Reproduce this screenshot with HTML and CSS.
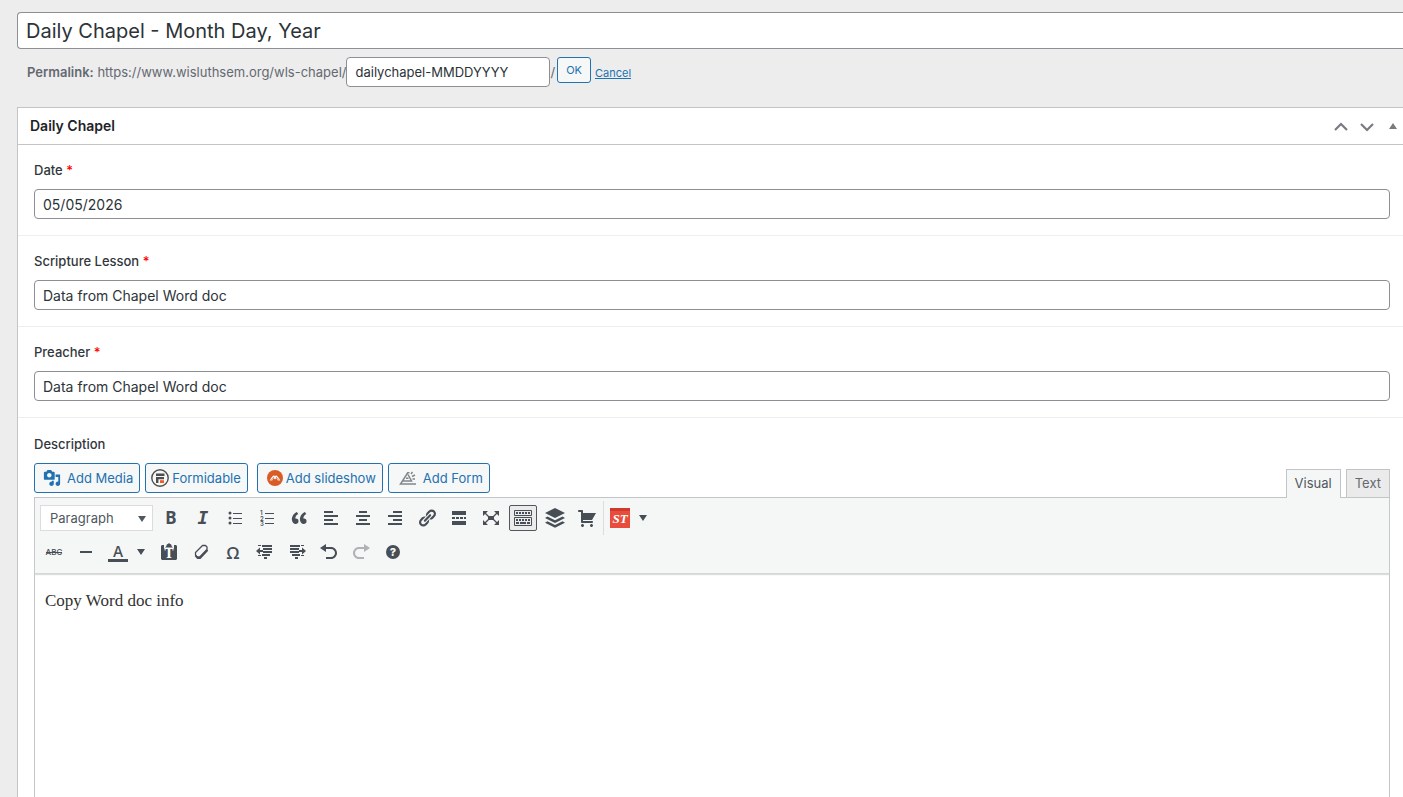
FILE: index.html
```
<!DOCTYPE html>
<html lang="en">
<head>
    <meta charset="UTF-8">
    <meta name="viewport" content="width=device-width, initial-scale=1.0">
    <title>Edit Daily Chapel</title>
    <link rel="stylesheet" href="styles.css">
</head>
<body>
    <form class="post-edit">
        <input class="title" type="text" value="Daily Chapel - Month Day, Year" aria-label="Title">

        <div class="permalink">
            <label for="slug"><strong>Permalink:</strong> https://www.wisluthsem.org/wls-chapel/</label><input class="text-input slug" id="slug" type="text" value="dailychapel-MMDDYYYY"><span>/</span>
            <button type="button" class="button button-small">OK</button>
            <a href="#" class="cancel">Cancel</a>
        </div>

        <section class="postbox">
            <header class="postbox-header">
                <h2>Daily Chapel</h2>
                <div class="handle-actions">
                    <button type="button" aria-label="Move up"><svg class="outline" width="20" height="20" viewBox="0 0 20 20"><path d="M4 14l6-6 6 6" stroke-width="2.200"/></svg></button>
                    <button type="button" aria-label="Move down"><svg class="outline" width="20" height="20" viewBox="0 0 20 20"><path d="M4 8l6 6 6-6" stroke-width="2.200"/></svg></button>
                    <button type="button" aria-label="Toggle panel"><svg width="20" height="20" viewBox="0 0 20 20"><path d="M6 13l4-6 4 6z"/></svg></button>
                </div>
            </header>

            <div class="field">
                <label for="date">Date <span class="required">*</span></label>
                <input class="text-input" id="date" type="text" value="05/05/2026">
            </div>
            <div class="field">
                <label for="lesson">Scripture Lesson <span class="required">*</span></label>
                <input class="text-input" id="lesson" type="text" value="Data from Chapel Word doc">
            </div>
            <div class="field">
                <label for="preacher">Preacher <span class="required">*</span></label>
                <input class="text-input" id="preacher" type="text" value="Data from Chapel Word doc">
            </div>

            <div class="field field-editor">
                <label for="description">Description</label>
                <div class="editor-tools">
                    <div class="media-buttons">
                        <button type="button" class="button">
                            <svg width="18" height="18" viewBox="0 0 20 20"><path d="M13 11V4c0-.55-.45-1-1-1h-1.670L9 1H5L3.670 3H2c-.55 0-1 .45-1 1v7c0 .55.45 1 1 1h10c.55 0 1-.45 1-1zM7 4.500c1.380 0 2.500 1.120 2.500 2.500S8.380 9.500 7 9.500 4.500 8.380 4.500 7 5.620 4.500 7 4.500zM14 6h5v10.500c0 1.380-1.120 2.500-2.500 2.500S14 17.880 14 16.500s1.120-2.500 2.500-2.500c.17 0 .34.02.5.05V9h-3V6zm-4 8.050V13h2v3.500c0 1.380-1.120 2.500-2.500 2.500S7 17.880 7 16.500 8.120 14 9.500 14c.17 0 .34.02.5.05z"/></svg>
                            Add Media
                        </button>
                        <button type="button" class="button formidable">
                            <svg width="18" height="18" viewBox="0 0 18 18"><circle cx="9" cy="9" r="8.200" fill="none" stroke="#4d4d4d" stroke-width="1.400"/><path d="M5 4.500h8.500V7H5zM5 8h8v2.200H7.400V14H5z" fill="#4d4d4d"/><path d="M9 11.200h4V14H9z" fill="#f05a24"/></svg>
                            Formidable
                        </button>
                        <button type="button" class="button slideshow">
                            <svg width="16" height="16" viewBox="0 0 16 16"><circle cx="8" cy="8" r="8" fill="#d95b26"/><path d="M2.700 10.500C4 8 5.500 6 7 5.300l1 1.200 1-1.200c1.500.7 3 2.700 4.300 5.200h-2.500L9.300 8 8 9.500 6.700 8l-1.500 2.500z" fill="#fff"/><path d="M4 10.500l3-3.500m2 0l3 3.500" stroke="#d95b26" stroke-width=".7"/></svg>
                            Add slideshow
                        </button>
                        <button type="button" class="button add-form">
                            <svg class="outline" width="18" height="18" viewBox="0 0 18 18" stroke-width="1.500"><path d="M10.500 3.800H8.700L1.500 15H17M4 12h8.500L9 5.500M9.500 9.200L7 9.300M12 5l1.500-2M13 7.500l3-1.500M13.500 10H16"/></svg>
                            Add Form
                        </button>
                    </div>
                    <div class="editor-tabs">
                        <button type="button" class="active">Visual</button>
                        <button type="button">Text</button>
                    </div>
                </div>

                <div class="editor">
                    <div class="toolbar">
                        <div class="toolbar-row">
                            <div class="format">
                                <select aria-label="Format"><option>Paragraph</option></select>
                                <svg width="10" height="8" viewBox="0 0 10 8"><path d="M1 1h8L5 7z"/></svg>
                            </div>
                            <button type="button" aria-label="Bold"><svg viewBox="0 0 20 20"><text x="10" y="16" class="g-bold">B</text></svg></button>
                            <button type="button" aria-label="Italic"><svg viewBox="0 0 20 20"><text x="10" y="16" class="g-italic">I</text></svg></button>
                            <button type="button" aria-label="Bulleted list"><svg viewBox="0 0 20 20"><circle cx="5" cy="5" r="1.500"/><circle cx="5" cy="10" r="1.500"/><circle cx="5" cy="15" r="1.500"/><path d="M8 5h9v1H8zM8 10h9v1H8zM8 15h9v1H8z"/></svg></button>
                            <button type="button" aria-label="Numbered list"><svg viewBox="0 0 20 20"><g class="g-num"><text x="3" y="7">1</text><text x="3" y="12.500">2</text><text x="3" y="18">3</text></g><path d="M8 5h9v1H8zM8 10h9v1H8zM8 15h9v1H8z"/></svg></button>
                            <button type="button" aria-label="Blockquote"><svg viewBox="0 0 20 20"><path d="M9.490 13.220c0-.74-.2-1.380-.61-1.900-.62-.78-1.830-.88-2.530-.72-.29-1.650 1.110-3.750 2.920-4.650L7.880 4c-2.730 1.300-5.420 4.280-4.960 8.050C3.210 14.430 4.590 16 6.540 16c.85 0 1.560-.25 2.120-.75s.83-1.180.83-2.030zm8.050 0c0-.74-.2-1.380-.61-1.900-.63-.78-1.830-.88-2.530-.72-.29-1.650 1.110-3.750 2.920-4.650L15.930 4c-2.730 1.300-5.410 4.280-4.950 8.050.29 2.380 1.660 3.950 3.610 3.950.85 0 1.560-.25 2.120-.75s.83-1.180.83-2.030z"/></svg></button>
                            <button type="button" aria-label="Align left"><svg viewBox="0 0 20 20"><path d="M3 3h9v2H3zM3 7h14v2H3zM3 11h9v2H3zM3 15h14v2H3z"/></svg></button>
                            <button type="button" aria-label="Align center"><svg viewBox="0 0 20 20"><path d="M6 3h8v2H6zM3 7h14v2H3zM6 11h8v2H6zM3 15h14v2H3z"/></svg></button>
                            <button type="button" aria-label="Align right"><svg viewBox="0 0 20 20"><path d="M8 3h9v2H8zM3 7h14v2H3zM8 11h9v2H8zM3 15h14v2H3z"/></svg></button>
                            <button type="button" aria-label="Insert link"><svg viewBox="0 0 20 20"><path d="M17.740 2.760c1.680 1.690 1.680 4.410 0 6.100l-1.530 1.520c-1.120 1.120-2.700 1.470-4.140 1.090l2.620-2.610.76-.77.76-.76c.84-.84.84-2.200 0-3.040-.84-.85-2.200-.85-3.040 0l-.77.76-3.380 3.380c-.37-1.440-.02-3.020 1.100-4.140l1.520-1.530c1.690-1.680 4.420-1.680 6.100 0zM8.590 13.430l5.340-5.340c.42-.42.42-1.100 0-1.520-.44-.43-1.130-.39-1.530 0l-5.330 5.340c-.42.42-.42 1.100 0 1.520.44.43 1.130.39 1.520 0zm-.76 2.290l4.140-4.150c.38 1.440.03 3.020-1.090 4.140l-1.520 1.530c-1.690 1.680-4.410 1.680-6.100 0-1.680-1.680-1.680-4.420 0-6.100l1.530-1.520c1.120-1.120 2.700-1.470 4.140-1.100l-4.140 4.150c-.85.84-.85 2.200 0 3.050.84.84 2.200.84 3.040 0z"/></svg></button>
                            <button type="button" aria-label="Read more"><svg viewBox="0 0 20 20"><path d="M3 3h14v4H3zM3 9h3v2H3zM7 9h3v2H7zM11 9h3v2h-3zM15 9h2v2h-2zM3 13h14v4H3z"/></svg></button>
                            <button type="button" aria-label="Fullscreen"><svg viewBox="0 0 20 20"><path d="M7 8h6v4H7zM2 3h5L2 8zM18 3v5l-5-5zM2 17v-5l5 5zM18 17h-5l5-5z"/><path d="M4 5l4 4M16 5l-4 4M4 15l4-4M16 15l-4-4" stroke="currentColor" stroke-width="1.300"/></svg></button>
                            <button type="button" class="pressed" aria-label="Toolbar toggle"><svg class="outline" viewBox="0 0 20 20"><path d="M1.500 2.500h17v5h-17zM1.500 9.500h17v8h-17z"/><path d="M3 5h14" stroke-width="2" stroke-dasharray="2 1"/><path d="M3 12h14" stroke-width="2" stroke-dasharray="2 1"/><path d="M3 15h3m1 0h6m1 0h3" stroke-width="2"/></svg></button>
                            <button type="button" aria-label="Layers"><svg viewBox="0 0 20 20"><path d="M10 0l10 5-10 5L0 5z"/><path d="M0 10l2.500-1.500L10 12.300l7.500-3.800L20 10l-10 5zM0 14.800l2.500-1.500 7.500 3.800 7.500-3.800 2.500 1.500-10 5z"/></svg></button>
                            <button type="button" aria-label="Cart"><svg viewBox="0 0 20 20"><path d="M6 13h9c.55 0 1 .45 1 1s-.45 1-1 1H5c-.55 0-1-.45-1-1V4H2c-.55 0-1-.45-1-1s.45-1 1-1h3c.55 0 1 .45 1 1v2h13l-4 7H6v1zm-.5 3c.83 0 1.500.67 1.500 1.500S6.330 19 5.500 19 4 18.330 4 17.500 4.670 16 5.500 16zm9 0c.83 0 1.500.67 1.500 1.500s-.67 1.500-1.500 1.500-1.500-.67-1.500-1.500.67-1.500 1.500-1.500z"/></svg></button>
                            <span class="separator"></span>
                            <button type="button" class="split" aria-label="Shortcodes"><svg viewBox="0 0 20 20"><path d="M0 0h20v20H0z" fill="#e74c3c"/><path d="M0 0h20v3H0z" fill="#d03a2c"/><text x="10" y="15" class="g-st">ST</text></svg><svg class="caret" viewBox="0 0 10 8"><path d="M1 1h8L5 7z"/></svg></button>
                        </div>
                        <div class="toolbar-row">
                            <button type="button" aria-label="Strikethrough"><svg viewBox="0 0 20 20"><text x="10" y="13" class="g-abc">ABC</text><path d="M2 10h16v1H2z"/></svg></button>
                            <button type="button" aria-label="Horizontal line"><svg viewBox="0 0 20 20"><path d="M4 9h12v2H4z"/></svg></button>
                            <button type="button" class="split" aria-label="Text color"><svg viewBox="0 0 20 20"><text x="10" y="15" class="g-color">A</text><path d="M0 17h20v3H0z"/></svg><svg class="caret" viewBox="0 0 10 8"><path d="M1 1h8L5 7z"/></svg></button>
                            <button type="button" aria-label="Paste as text"><svg viewBox="0 0 20 20"><path d="M12.500 4V3l-1-1h-.4a1.200 1.200 0 0 0-2.200 0h-.4l-1 1v1L6 5.500h8zM3 3h2v3.500h10V3h2l1 1v13l-1 1H3l-1-1V4z"/><text x="10" y="16" class="g-paste">T</text></svg></button>
                            <button type="button" aria-label="Clear formatting"><svg class="outline" viewBox="0 0 20 20" stroke-linejoin="round"><path d="M11.500 3.500h3l1.500 1.500v2.500L9 14.800H6L4.500 13v-2.500z" stroke-width="1.300"/><path d="M4.500 13.500L6.500 16H9l7.500-8" stroke-width="2"/></svg></button>
                            <button type="button" aria-label="Special character"><svg viewBox="0 0 20 20"><text x="10" y="17" class="g-omega">Ω</text></svg></button>
                            <button type="button" aria-label="Decrease indent"><svg viewBox="0 0 20 20"><path d="M3 3h3v1H3zM7 3h10v2H7zM8 6h9v2H8zM8 9h9v2H8zM7 12h8v2H7zM3 13h3v1H3zM9 15h3v2H9zM1 9l4-3.500V8h3v2H5v2.500z"/></svg></button>
                            <button type="button" aria-label="Increase indent"><svg viewBox="0 0 20 20"><path d="M3 3h10v2H3zM14 3h3v1h-3zM3 6h9v2H3zM3 9h9v2H3zM5 12h8v2H5zM14 13h3v1h-3zM8 15h3v2H8zM19 9l-4-3.500V8h-3v2h3v2.500z"/></svg></button>
                            <button type="button" aria-label="Undo"><svg viewBox="0 0 20 20"><path d="M12 5H7V2L1 6l6 4V7h5c2.200 0 4 1.800 4 4s-1.800 4-4 4H7v2h5c3.300 0 6-2.700 6-6s-2.700-6-6-6z"/></svg></button>
                            <button type="button" disabled aria-label="Redo"><svg viewBox="0 0 20 20"><path d="M8 5h5V2l6 4-6 4V7H8c-2.200 0-4 1.800-4 4s1.800 4 4 4h5v2H8c-3.300 0-6-2.700-6-6s2.700-6 6-6z"/></svg></button>
                            <button type="button" aria-label="Help"><svg viewBox="0 0 20 20"><circle cx="10" cy="10" r="7"/><text x="10" y="14" class="g-help">?</text></svg></button>
                        </div>
                    </div>
                    <textarea id="description">Copy Word doc info</textarea>
                </div>
            </div>
        </section>
    </form>
</body>
</html>
```

FILE: styles.css
```
* { box-sizing: border-box; }
body { margin: 0; background: #ededed; color: #3c434a; font: 13px/18px Inter, sans-serif; overflow: hidden; }
input, button, select, textarea { font: inherit; color: inherit; margin: 0; }
button { cursor: pointer; }
svg { fill: currentColor; flex: none; overflow: visible; }
.outline { fill: none; stroke: currentColor; }

/* the form runs to the right edge of the window */
.post-edit { display: flex; flex-direction: column; height: 100vh; padding: 12px 0 0 17px; }

.title { width: 100%; height: 37px; padding: 0 8px; border: 1px solid #8c8f94; border-right: 0; border-radius: 4px 0 0 4px; background: #fff; color: #2c3338; font-size: 20px; flex: none; }
.text-input { width: 100%; height: 30px; padding: 0 8px; border: 1px solid #8c8f94; border-radius: 4px; background: #fff; color: #2c3338; font-size: 14px; }

.permalink { display: flex; align-items: center; height: 30px; margin: 8px 0 20px; padding-left: 10px; color: #646970; flex: none; }
.permalink strong { font-weight: 600; }
.permalink .slug { width: 204px; font-size: 13px; }
.cancel { margin: 2px 0 0 4px; color: #2271b1; font-size: 11px; }

.button { display: flex; align-items: center; gap: 6px; height: 30px; padding: 0 6px 0 8px; border: 1px solid #2271b1; border-radius: 3px; background: #f6f7f7; color: #2271b1; white-space: nowrap; }
.button-small { height: 26px; margin: 0 0 4px 2px; padding: 0 8px; font-size: 11px; }

.postbox { flex: 1; display: flex; flex-direction: column; border: 1px solid #c3c4c7; border-width: 1px 0 0 1px; background: #fff; }
.postbox-header { display: flex; align-items: center; justify-content: space-between; height: 37px; padding-left: 12px; border-bottom: 1px solid #c3c4c7; }
.postbox-header h2 { margin: 0; color: #1d2327; font-size: 14px; font-weight: 600; }
.handle-actions { display: flex; }
.handle-actions button { display: flex; justify-content: center; width: 26px; padding: 0; border: 0; background: none; color: #787c82; }
.handle-actions button:last-child { width: 20px; margin-left: 3px; }

.field { padding: 16px 13px 16px 16px; border-bottom: 1px solid #eee; }
.field label { display: block; margin-bottom: 10px; color: #32373c; font-weight: 500; }
.required { color: #f00; }
.field-editor { flex: 1; display: flex; flex-direction: column; padding-top: 17px; padding-bottom: 0; border: 0; }

.editor-tools { display: flex; justify-content: space-between; align-items: flex-end; }
.media-buttons { display: flex; gap: 5px; margin-bottom: 4px; }
.formidable { gap: 3px; padding: 0 6px 0 5px; }
.slideshow { gap: 3px; margin-left: 4px; padding-left: 9px; }
.add-form { padding-left: 10px; }
.add-form svg { color: #82878c; }
.editor-tabs { display: flex; gap: 5px; }
.editor-tabs button { height: 28px; padding: 0 8px 2px; border: 1px solid #c3c4c7; border-bottom: 0; background: #ebebeb; color: #646970; }
.editor-tabs .active { position: relative; height: 29px; margin-bottom: -1px; background: #f5f7f7; color: #50575e; }

.editor { flex: 1; display: flex; flex-direction: column; border: 1px solid #c3c4c7; border-bottom: 0; }
.toolbar { padding: 3px 3px 4px; border-bottom: 1px solid #d5d7d9; background: #f5f7f7; color: #50575e; box-shadow: 0 1px 1px #ddd; position: relative; }
.toolbar-row { display: flex; align-items: center; height: 34px; }
.toolbar button { display: flex; align-items: center; justify-content: center; width: 28px; height: 26px; margin: 0 2px; padding: 0; border: 0; border-radius: 2px; background: none; color: #484e55; }
.toolbar button svg { width: 20px; height: 20px; }
.toolbar button:disabled { opacity: .4; }
.toolbar .pressed { border: 1px solid #50575e; background: #ebebeb; }
.toolbar .split { justify-content: flex-start; width: 47px; padding-left: 4px; gap: 8px; }
.toolbar .split .caret { width: 10px; height: 8px; }
.format { position: relative; width: 113px; height: 26px; margin: 0 2px; }
.format select { width: 100%; height: 100%; padding: 0 9px; border: 1px solid #dcdcde; background: #fff; appearance: none; }
.format svg { position: absolute; top: 10px; right: 6px; pointer-events: none; }
.separator { width: 1px; height: 34px; background: #dcdcde; }

/* lettered toolbar icons */
.g-bold { font: bold 17px "Noto Sans", sans-serif; text-anchor: middle; }
.g-italic { font: italic bold 18px "DejaVu Sans Mono", monospace; text-anchor: middle; }
.g-num text { font: 600 6px Inter, sans-serif; }
.g-st { font: italic bold 13px "Liberation Serif", serif; fill: #fff; text-anchor: middle; }
.g-abc { font: 500 8px Inter, sans-serif; text-anchor: middle; }
.g-color { font: 500 15px Inter, sans-serif; text-anchor: middle; }
.g-paste { font: bold 12px "DejaVu Serif", serif; fill: #fff; text-anchor: middle; }
.g-omega { font: 600 17px "Open Sans", sans-serif; text-anchor: middle; }
.g-help { font: 800 11px Inter, sans-serif; fill: #f5f7f7; text-anchor: middle; }

.editor textarea { flex: 1; width: 100%; padding: 14px 10px; border: 0; background: #fff; color: #333; font: 17px/26px Georgia, "Liberation Serif", serif; resize: none; }
```
